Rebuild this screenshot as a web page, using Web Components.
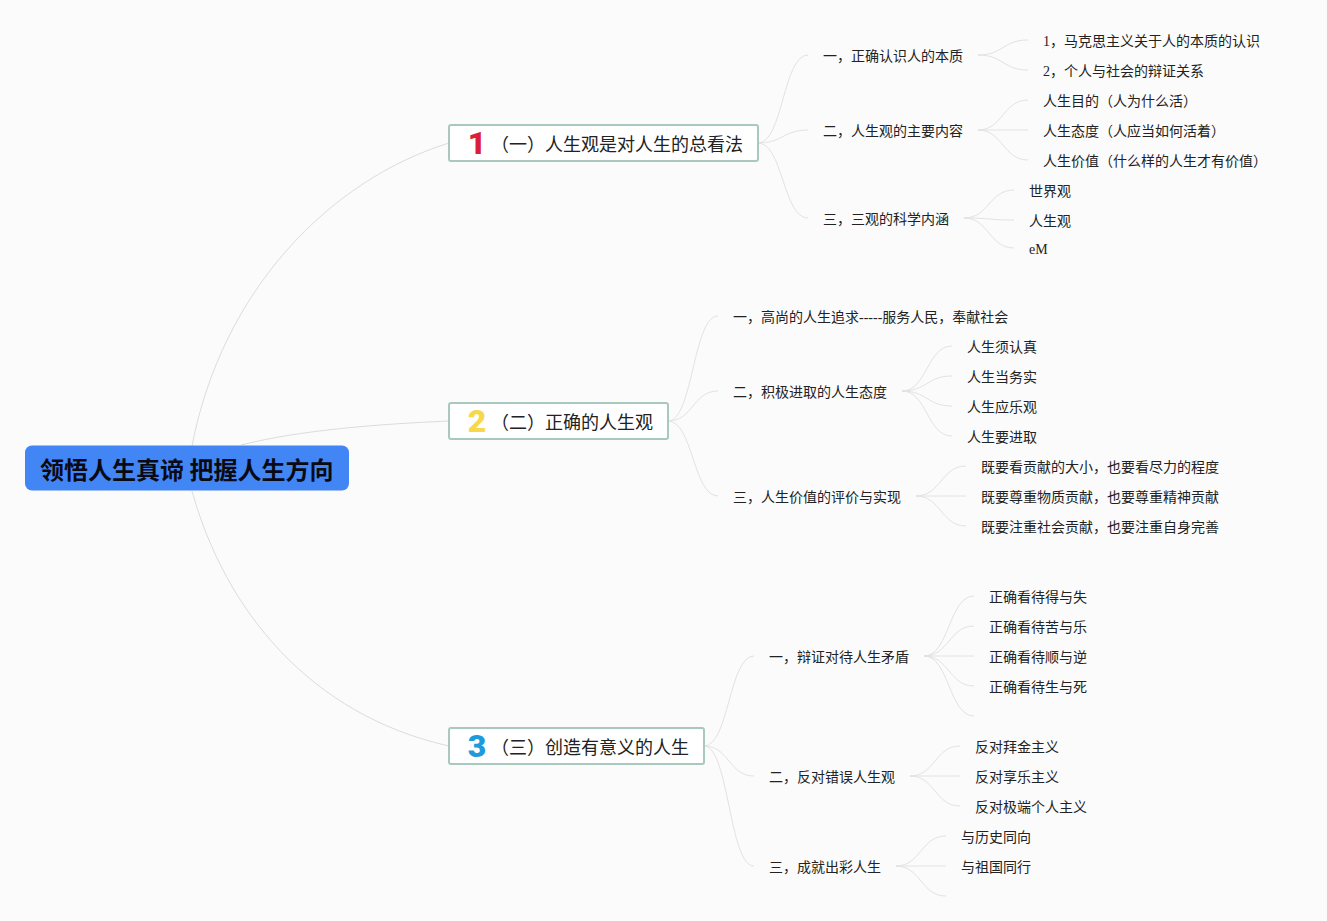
<!DOCTYPE html>
<html lang="zh">
<head>
<meta charset="utf-8">
<title>领悟人生真谛 把握人生方向</title>
<style>
  html, body { margin: 0; background: #fbfbfb; }
</style>
</head>
<body>
<mind-map>
  <mind-root x="25" y="468">领悟人生真谛 把握人生方向</mind-root>

  <mind-topic x="448" y="143" num="1" color="#dc1e3c" curve="192,446 222,290 330,180 449,143">（一）人生观是对人生的总看法</mind-topic>
  <mind-leaf x="823" y="56" from="758,143">一，正确认识人的本质</mind-leaf>
  <mind-leaf x="1043" y="41" from="978,55">1，马克思主义关于人的本质的认识</mind-leaf>
  <mind-leaf x="1043" y="71" from="978,55">2，个人与社会的辩证关系</mind-leaf>
  <mind-leaf x="823" y="131" from="758,143">二，人生观的主要内容</mind-leaf>
  <mind-leaf x="1043" y="101" from="978,130">人生目的（人为什么活）</mind-leaf>
  <mind-leaf x="1043" y="131" from="978,130">人生态度（人应当如何活着）</mind-leaf>
  <mind-leaf x="1043" y="161" from="978,130">人生价值（什么样的人生才有价值）</mind-leaf>
  <mind-leaf x="823" y="219" from="758,143">三，三观的科学内涵</mind-leaf>
  <mind-leaf x="1029" y="191" from="964,218">世界观</mind-leaf>
  <mind-leaf x="1029" y="221" from="964,218">人生观</mind-leaf>
  <mind-leaf x="1029" y="249" from="964,218">eM</mind-leaf>

  <mind-topic x="448" y="421" num="2" color="#f6d84a" curve="241,445 300,430 380,424 449,421">（二）正确的人生观</mind-topic>
  <mind-leaf x="733" y="317" from="668,421">一，高尚的人生追求-----服务人民，奉献社会</mind-leaf>
  <mind-leaf x="733" y="392" from="668,421">二，积极进取的人生态度</mind-leaf>
  <mind-leaf x="967" y="347" from="902,391">人生须认真</mind-leaf>
  <mind-leaf x="967" y="377" from="902,391">人生当务实</mind-leaf>
  <mind-leaf x="967" y="407" from="902,391">人生应乐观</mind-leaf>
  <mind-leaf x="967" y="437" from="902,391">人生要进取</mind-leaf>
  <mind-leaf x="733" y="497" from="668,421">三，人生价值的评价与实现</mind-leaf>
  <mind-leaf x="981" y="467" from="916,496">既要看贡献的大小，也要看尽力的程度</mind-leaf>
  <mind-leaf x="981" y="497" from="916,496">既要尊重物质贡献，也要尊重精神贡献</mind-leaf>
  <mind-leaf x="981" y="527" from="916,496">既要注重社会贡献，也要注重自身完善</mind-leaf>

  <mind-topic x="448" y="746" num="3" color="#1f9bdc" curve="192,491 225,610 310,715 449,746">（三）创造有意义的人生</mind-topic>
  <mind-leaf x="769" y="657" from="704,746">一，辩证对待人生矛盾</mind-leaf>
  <mind-leaf x="989" y="597" from="924,656">正确看待得与失</mind-leaf>
  <mind-leaf x="989" y="627" from="924,656">正确看待苦与乐</mind-leaf>
  <mind-leaf x="989" y="657" from="924,656">正确看待顺与逆</mind-leaf>
  <mind-leaf x="989" y="687" from="924,656">正确看待生与死</mind-leaf>
  <mind-leaf x="989" y="717" from="924,656"></mind-leaf>
  <mind-leaf x="769" y="777" from="704,746">二，反对错误人生观</mind-leaf>
  <mind-leaf x="975" y="747" from="910,776">反对拜金主义</mind-leaf>
  <mind-leaf x="975" y="777" from="910,776">反对享乐主义</mind-leaf>
  <mind-leaf x="975" y="807" from="910,776">反对极端个人主义</mind-leaf>
  <mind-leaf x="769" y="867" from="704,746">三，成就出彩人生</mind-leaf>
  <mind-leaf x="961" y="837" from="896,866">与历史同向</mind-leaf>
  <mind-leaf x="961" y="867" from="896,866">与祖国同行</mind-leaf>
  <mind-leaf x="961" y="897" from="896,866"></mind-leaf>
</mind-map>

<script>
const FONT = `"Liberation Serif", "Noto Sans CJK SC", serif`;

// shared placing of a node on the map canvas
class MindNode extends HTMLElement {
  connectedCallback() {
    this.style.left = this.getAttribute('x') + 'px';
    this.style.top = this.getAttribute('y') + 'px';
  }
}

class MindRoot extends MindNode {
  constructor() {
    super();
    this.attachShadow({mode: 'open'}).innerHTML = `
      <style>
        :host {
          position: absolute;
          transform: translateY(-50%);
          display: block;
          box-sizing: border-box;
          width: 324px;
          padding: 6px 0 6px 15px;
          background: #4285f4;
          border-radius: 7px;
          color: #0a0a14;
          font: bold 24px/33px "Noto Sans CJK SC", sans-serif;
          white-space: nowrap;
          z-index: 2;
        }
      </style>
      <slot></slot>
    `;
  }
}

class MindTopic extends MindNode {
  constructor() {
    super();
    this.attachShadow({mode: 'open'}).innerHTML = `
      <style>
        :host {
          position: absolute;
          transform: translateY(-50%);
          display: flex;
          align-items: center;
          box-sizing: border-box;
          height: 38px;
          padding: 4px 14px 0 15px;
          background: #fff;
          border: 2px solid #a9c9bf;
          border-radius: 3px;
          color: #222;
          font: 18px/24px ${FONT};
          white-space: nowrap;
          z-index: 2;
        }
        .num {
          width: 26px;
          margin-top: -5px;
          font: 900 32px/30px Roboto, sans-serif;
          text-align: center;
          transform: translateX(-1px);
        }
      </style>
      <span class="num"></span><slot></slot>
    `;
  }
  connectedCallback() {
    super.connectedCallback();
    const num = this.shadowRoot.querySelector('.num');
    num.textContent = this.getAttribute('num');
    num.style.color = this.getAttribute('color');
  }
}

class MindLeaf extends MindNode {
  constructor() {
    super();
    this.attachShadow({mode: 'open'}).innerHTML = `
      <style>
        :host {
          position: absolute;
          transform: translateY(calc(-50% + 1px));
          display: block;
          color: #222;
          font: 14px/20px ${FONT};
          white-space: nowrap;
        }
      </style>
      <slot></slot>
    `;
  }
}

class MindMap extends HTMLElement {
  constructor() {
    super();
    this.attachShadow({mode: 'open'}).innerHTML = `
      <style>
        :host {
          display: block;
          position: relative;
          width: 1327px;
          height: 921px;
          overflow: hidden;
        }
        svg { position: absolute; left: 0; top: 0; }
        path { fill: none; stroke: #e2e2e2; stroke-width: 1; }
        path.arc { stroke: #dcdcdc; }
      </style>
      <svg width="1327" height="921"></svg>
      <slot></slot>
    `;
  }

  connectedCallback() {
    const svg = this.shadowRoot.querySelector('svg');
    const add = (d, cls) => {
      const path = document.createElementNS('http://www.w3.org/2000/svg', 'path');
      path.setAttribute('d', d);
      cls && path.setAttribute('class', cls);
      svg.append(path);
    };
    for (const node of this.children) {
      const curve = node.getAttribute('curve');
      if (curve) {
        const [a, b, c, d] = curve.split(' ');
        add(`M${a} C${b} ${c} ${d}`, 'arc');
      }
      const from = node.getAttribute('from');
      if (from) {
        const [x0, y0] = from.split(',').map(Number);
        const x1 = +node.getAttribute('x') - 15;
        const y1 = +node.getAttribute('y') - 1;
        const mid = (x1 - x0) * 0.5;
        add(`M${x0} ${y0} C${x0 + mid} ${y0} ${x1 - mid} ${y1} ${x1} ${y1}`);
      }
    }
  }
}

customElements.define('mind-root', MindRoot);
customElements.define('mind-topic', MindTopic);
customElements.define('mind-leaf', MindLeaf);
customElements.define('mind-map', MindMap);
</script>
</body>
</html>
